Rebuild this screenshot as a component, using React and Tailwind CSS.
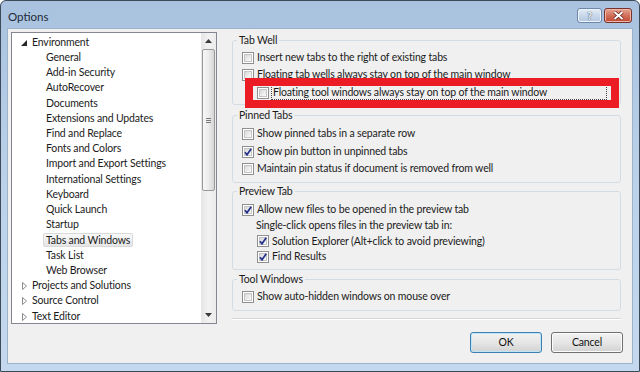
import React from 'react'

const FONT = "[font-family:Lato,'Open_Sans',sans-serif]"

const tree = [
  { label: 'Environment', level: 0, open: true },
  { label: 'General', level: 1 },
  { label: 'Add-in Security', level: 1 },
  { label: 'AutoRecover', level: 1 },
  { label: 'Documents', level: 1 },
  { label: 'Extensions and Updates', level: 1 },
  { label: 'Find and Replace', level: 1 },
  { label: 'Fonts and Colors', level: 1 },
  { label: 'Import and Export Settings', level: 1 },
  { label: 'International Settings', level: 1 },
  { label: 'Keyboard', level: 1 },
  { label: 'Quick Launch', level: 1 },
  { label: 'Startup', level: 1 },
  { label: 'Tabs and Windows', level: 1, selected: true },
  { label: 'Task List', level: 1 },
  { label: 'Web Browser', level: 1 },
  { label: 'Projects and Solutions', level: 0 },
  { label: 'Source Control', level: 0 },
  { label: 'Text Editor', level: 0 },
]

function Checkbox({ checked }) {
  return (
    <span className="relative flex h-[12px] w-[12px] shrink-0 items-center justify-center border border-[#8e8f8f] bg-white">
      <span className="absolute inset-[1px] border border-[#c5c5c5] bg-gradient-to-br from-[#d9d9d9] to-[#fbfbfb]" />
      {checked && (
        <svg className="relative" width="10" height="10" viewBox="0 0 10 10">
          <path d="M2 5.2 L4 7.8 L8.2 1.8" fill="none" stroke="#23308a" strokeWidth="1.7" />
        </svg>
      )}
    </span>
  )
}

function Row({ checked, label, indent, h, focus }) {
  return (
    <div className={`flex items-center gap-[2px] ${h} ${indent ? 'pl-[24px]' : 'pl-[9px]'}`}>
      <Checkbox checked={checked} />
      {focus ? (
        <span className="mr-[13px] flex-1 border border-dotted border-[#444] px-[1px] leading-[13px]">{label}</span>
      ) : (
        <span className="ml-[1px]">{label}</span>
      )}
    </div>
  )
}

function Group({ title, children, className }) {
  return (
    <fieldset className={`rounded-[3px] border border-[#d3dce3] ${className}`}>
      <legend className="ml-[4px] px-[2px] leading-[15px]">{title}</legend>
      {children}
    </fieldset>
  )
}

function TreeItem({ item }) {
  return (
    <div className="flex h-[15.22px] items-center">
      {item.level === 0 ? (
        <>
          <span className="flex w-[20px] justify-end pr-[5px]">
            {item.open ? (
              <svg width="6" height="6" viewBox="0 0 6 6">
                <polygon points="6,0 6,6 0,6" fill="#262626" />
              </svg>
            ) : (
              <svg width="5" height="8" viewBox="0 0 5 8">
                <polygon points="0.5,0.5 4.5,4 0.5,7.5" fill="none" stroke="#8c8c8c" />
              </svg>
            )}
          </span>
          <span>{item.label}</span>
        </>
      ) : item.selected ? (
        <span className="ml-[31px] rounded-[2px] border border-[#d9d9d9] bg-gradient-to-b from-[#f8f8f8] to-[#e5e5e5] px-[2px] leading-[12px]">
          {item.label}
        </span>
      ) : (
        <span className="ml-[34px]">{item.label}</span>
      )}
    </div>
  )
}

function Button({ children, primary }) {
  return (
    <button
      className={`h-[21px] w-[72px] rounded-[3px] border bg-gradient-to-b from-[#f2f2f2] via-[#e6e6e6] to-[#d2d2d2] text-[#111] ${
        primary ? 'border-[#3c7fb1] shadow-[inset_0_0_0_1px_#bfe3f7]' : 'border-[#707070] shadow-[inset_0_0_0_1px_#fcfcfc]'
      }`}
    >
      {children}
    </button>
  )
}

export default function App() {
  return (
    <div className={`relative flex h-[372px] w-[640px] flex-col overflow-hidden rounded-t-[6px] border border-[#3d4a58] bg-gradient-to-b from-[#a8c2df] via-[#bcd2ea] to-[#c4d9ef] text-[10.5px] tracking-[-0.15px] text-[#1b1b1b] ${FONT}`}>
      {/* title bar */}
      <div className="flex h-[27px] shrink-0 items-start justify-between pl-[7px] pr-[7px]">
        <span className="pt-[7px] text-[11.5px] tracking-normal text-[#1e2a38]">Options</span>
        <div className="flex gap-[2px] pt-[7px]">
          <div className="flex h-[15px] w-[25px] items-center justify-center rounded-[3px] border border-[#6e88a8] bg-gradient-to-b from-[#e4ecf6] via-[#c9d8ea] to-[#b2c7df] shadow-[inset_0_0_0_1px_#eef3f9]">
            <span className="text-[11px] font-bold leading-none text-[#f4f6f9] [text-shadow:0_0_1px_#40546e,0_0_1px_#40546e]">?</span>
          </div>
          <div className="flex h-[15px] w-[28px] items-center justify-center rounded-[3px] border border-[#7a3127] bg-gradient-to-b from-[#e8a592] via-[#d2705b] to-[#c2452f] shadow-[inset_0_0_0_1px_#eab8aa]">
            <svg width="11" height="9" viewBox="0 0 11 9">
              <path d="M1.5 1 L9.5 8 M9.5 1 L1.5 8" stroke="#5a1d14" strokeWidth="3.4" />
              <path d="M1.5 1 L9.5 8 M9.5 1 L1.5 8" stroke="#fff" strokeWidth="2" />
            </svg>
          </div>
        </div>
      </div>

      {/* client */}
      <div className="mx-[6px] mb-[7px] flex flex-1 flex-col border border-[#9db3cc] bg-[#f0f0f0]">
        <div className="flex h-[295px] pt-[3px]">
          {/* tree */}
          <div className="ml-[3px] flex h-[292px] w-[206px] border border-[#828790] bg-white">
            <div className="flex-1 overflow-hidden pt-[2px]">
              {tree.map((t) => (
                <TreeItem key={t.label} item={t} />
              ))}
            </div>
            <div className="flex w-[15px] flex-col bg-gradient-to-r from-[#e6e6e6] via-[#f2f2f2] to-[#ececec]">
              <div className="flex h-[16px] items-center justify-center">
                <svg width="7" height="4" viewBox="0 0 7 4">
                  <polygon points="3.5,0 7,4 0,4" fill="#3a3a3a" />
                </svg>
              </div>
              <div className="mx-[1px] flex h-[142px] items-center justify-center rounded-[2px] border border-[#989898] bg-gradient-to-r from-[#f7f7f7] via-[#ececec] to-[#d6d6d6]">
                <div className="flex flex-col gap-[1px]">
                  <span className="h-[1px] w-[5px] bg-[#7a7a7a]" />
                  <span className="h-[1px] w-[5px] bg-[#7a7a7a]" />
                  <span className="h-[1px] w-[5px] bg-[#7a7a7a]" />
                </div>
              </div>
              <div className="flex-1" />
              <div className="flex h-[16px] items-center justify-center">
                <svg width="7" height="4" viewBox="0 0 7 4">
                  <polygon points="0,0 7,0 3.5,4" fill="#3a3a3a" />
                </svg>
              </div>
            </div>
          </div>

          {/* options */}
          <div className="ml-[15px] flex w-[389px] flex-col pt-[1px]">
            <Group title="Tab Well">
              <div className="pt-[1px] pb-[2.5px]">
                <Row h="h-[17.5px]" label="Insert new tabs to the right of existing tabs" />
                <Row h="h-[17.5px]" label="Floating tab wells always stay on top of the main window" />
                <Row h="h-[17.5px]" indent focus label="Floating tool windows always stay on top of the main window" />
              </div>
            </Group>
            <Group title="Pinned Tabs" className="mt-[3px]">
              <div className="pt-[2px] pb-[3.9px]">
                <Row h="h-[17.7px]" label="Show pinned tabs in a separate row" />
                <Row h="h-[17.7px]" checked label="Show pin button in unpinned tabs" />
                <Row h="h-[17.7px]" label="Maintain pin status if document is removed from well" />
              </div>
            </Group>
            <Group title="Preview Tab" className="mt-[1px]">
              <div className="pt-[3.5px] pb-[4.1px]">
                <Row h="h-[15.6px]" checked label="Allow new files to be opened in the preview tab" />
                <div className="flex h-[15.6px] items-center pl-[23px]">Single-click opens files in the preview tab in:</div>
                <Row h="h-[15.6px]" indent checked label="Solution Explorer (Alt+click to avoid previewing)" />
                <Row h="h-[15.6px]" indent checked label="Find Results" />
              </div>
            </Group>
            <Group title="Tool Windows" className="mt-[2px]">
              <div className="pt-[2.3px] pb-[4.7px]">
                <Row h="h-[16px]" label="Show auto-hidden windows on mouse over" />
              </div>
            </Group>
            <div className="mt-[7.5px] h-[2px] border-t border-b border-t-[#d5d5d5] border-b-white" />
          </div>
        </div>

        <div className="mt-[8px] flex justify-end gap-[9px] pr-[9px]">
          <Button primary>OK</Button>
          <Button>Cancel</Button>
        </div>
      </div>

      {/* red highlight annotation */}
      <div className="pointer-events-none absolute left-[244px] top-[77px] h-[30px] w-[374px] border-[8px] border-[#ec1c24]" />
    </div>
  )
}
